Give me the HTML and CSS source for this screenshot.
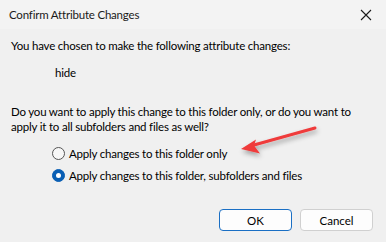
FILE: index.html
```html
<!DOCTYPE html>
<html>
<head>
<meta charset="utf-8">
<link rel="stylesheet" href="styles.css">
</head>
<body>
<div class="window">
  <div class="titlebar">
    <span class="title">Confirm Attribute Changes</span>
    <svg class="close" width="12" height="12" viewBox="0 0 12 12"><path d="M1 1 L11 11 M11 1 L1 11" stroke="#1a1a1a" stroke-width="1.1" fill="none"/></svg>
  </div>
  <div class="content">
    <p class="line intro">You have chosen to make the following attribute changes:</p>
    <p class="line attr">hide</p>
    <p class="line question">Do you want to apply this change to this folder only, or do you want to<br>apply it to all subfolders and files as well?</p>
    <div class="options">
      <label class="option"><span class="radio"></span>Apply changes to this folder only</label>
      <label class="option"><span class="radio checked"></span>Apply changes to this folder, subfolders and files</label>
    </div>
    <div class="buttons">
      <button class="btn primary">OK</button>
      <button class="btn">Cancel</button>
    </div>
  </div>
  <svg class="arrow" width="386" height="242" viewBox="0 0 386 242">
    <defs>
      <filter id="sh" x="-20%" y="-50%" width="140%" height="200%">
        <feGaussianBlur in="SourceAlpha" stdDeviation="2.5"/>
        <feOffset dx="1" dy="3" result="b"/>
        <feComponentTransfer><feFuncA type="linear" slope="0.35"/></feComponentTransfer>
        <feMerge><feMergeNode/><feMergeNode in="SourceGraphic"/></feMerge>
      </filter>
    </defs>
    <g filter="url(#sh)">
      <path d="M315 128 L254 145" stroke="#ef3b3b" stroke-width="3" stroke-linecap="round" fill="none"/>
      <path d="M241 149 L256 139.5 L254 145.5 L260 153.5 Z" fill="#ef3b3b"/>
    </g>
  </svg>
</div>
</body>
</html>
```
FILE: styles.css
```css
html, body {
  margin: 0;
  padding: 0;
  background: #f0f0f0;
}
.window {
  position: relative;
  width: 386px;
  height: 242px;
  background: #f0f0f0;
  font-family: Lato, "Noto Sans", sans-serif;
  font-size: 11.5px;
  letter-spacing: -0.2px;
  color: #000;
  overflow: hidden;
}
.titlebar {
  height: 29px;
  background: #f3f3f3;
  display: flex;
  align-items: center;
  justify-content: space-between;
  padding: 0 14px 0 9px;
}
.title {
  font-size: 11.5px;
  color: #1a1a1a;
  white-space: nowrap;
}
.close {
  display: block;
}
.content {
  padding: 9px 0 0 11px;
}
.line {
  margin: 0;
  line-height: 15px;
  white-space: nowrap;
}
.attr {
  margin-top: 12px;
  padding-left: 44px;
}
.question {
  margin-top: 24px;
}
.options {
  display: flex;
  flex-direction: column;
  gap: 6px;
  margin-top: 11px;
  padding-left: 41px;
}
.option {
  display: flex;
  align-items: center;
  gap: 4px;
  height: 16px;
  white-space: nowrap;
}
.radio {
  width: 11px;
  height: 11px;
  border: 1px solid #555;
  border-radius: 50%;
  background: #f7f7f7;
  box-sizing: content-box;
  position: relative;
}
.radio.checked {
  background: #0a5fb4;
  border-color: #0a5fb4;
}
.radio.checked::after {
  content: "";
  position: absolute;
  left: 3px;
  top: 3px;
  width: 5px;
  height: 5px;
  border-radius: 50%;
  background: #fff;
}
.buttons {
  display: flex;
  justify-content: flex-end;
  gap: 8px;
  margin-top: 26px;
  padding-right: 13px;
}
.btn {
  width: 73px;
  height: 22px;
  font-family: inherit;
  font-size: 11.5px;
  color: #000;
  background: #fdfdfd;
  border: 1px solid #d0d0d0;
  border-radius: 4px;
  padding: 0;
}
.btn.primary {
  border-color: #1a6fc4;
}
.arrow {
  position: absolute;
  left: 0;
  top: 0;
  pointer-events: none;
}
```
